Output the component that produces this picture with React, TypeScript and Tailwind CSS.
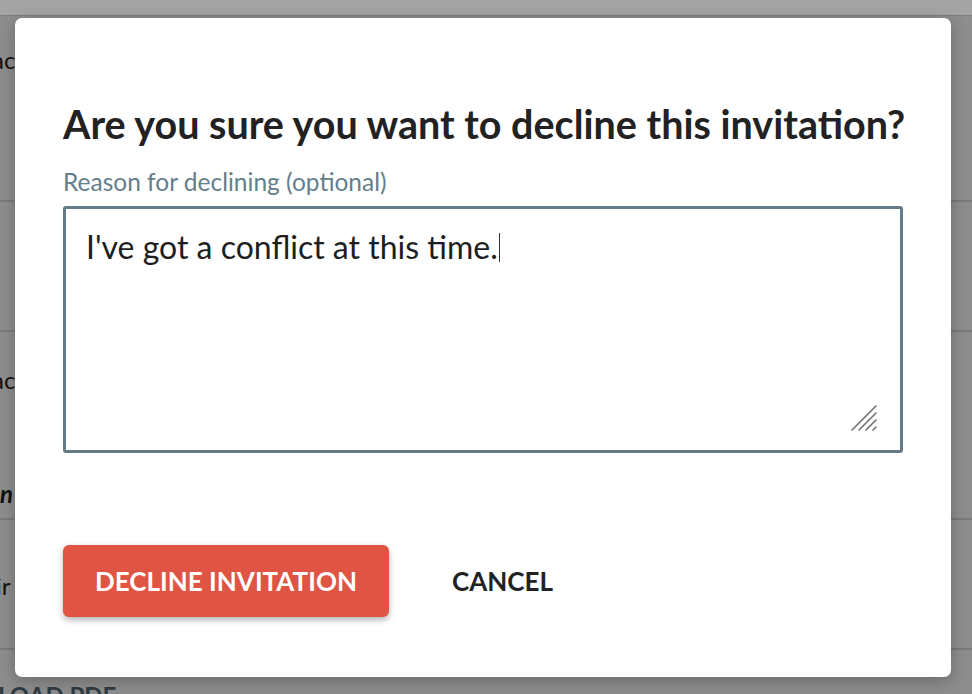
import React from "react";

const font = { fontFamily: 'Lato, "Open Sans", Arial, sans-serif' };

export default function App() {
  return (
    <div className="relative w-[972px] h-[694px] overflow-hidden bg-[#8d8d8d]" style={font}>
      {/* background page */}
      <div className="flex flex-col w-full">
        <div className="h-[16px] bg-[#a4a4a4] border-b border-[#7d7d7d]" />
        <div className="h-[186px] border-b-2 border-[#7a7a7a] pt-[26px]">
          <div className="text-[24px] text-[#111] ml-[-8px]">ac</div>
        </div>
        <div className="h-[130px] border-b-2 border-[#7a7a7a]" />
        <div className="h-[188px] border-b-2 border-[#7a7a7a] pt-[30px]">
          <div className="text-[24px] text-[#111] ml-[-8px]">ac</div>
          <div className="text-[24px] text-[#111] font-bold italic mt-[78px] ml-[-6px]">in</div>
        </div>
        <div className="h-[130px] border-b-2 border-[#7a7a7a] pt-[48px]">
          <div className="text-[24px] text-[#111] ml-[-4px]">ir</div>
        </div>
        <div className="pt-[28px] ml-[-83px] text-[24px] font-bold text-[#2f3b44]">DOWNLOAD PDF</div>
      </div>

      {/* modal */}
      <div className="absolute left-[15px] top-[18px] w-[936px] h-[659px] bg-white rounded-[7px] shadow-[0_4px_16px_rgba(0,0,0,0.25)] px-[48px] pt-[82px]">
        <h1 className="text-[39.5px] leading-[48px] font-bold text-[#222] whitespace-nowrap">
          Are you sure you want to decline this invitation?
        </h1>
        <label className="block mt-[20px] text-[24.5px] leading-[28px] text-[#657e8c]">
          Reason for declining (optional)
        </label>
        <div className="relative mt-[10px] w-[840px] h-[247px] border-[3px] border-[#657b87] rounded-[3px] pl-[20px] pt-[18px]">
          <div className="text-[32px] leading-[40px] text-[#1e1e1e] flex items-center">
            <span>I've got a conflict at this time.</span>
            <span className="inline-block w-[1px] h-[29px] bg-[#333] ml-[1px]" />
          </div>
          <svg className="absolute right-[22px] bottom-[18px]" width="28" height="28" viewBox="0 0 28 28">
            <g stroke="#6e6e6e" strokeWidth="1.6" strokeLinecap="round">
              <line x1="2" y1="26" x2="26" y2="2" />
              <line x1="9" y1="26" x2="26" y2="9" />
              <line x1="16" y1="26" x2="26" y2="16" />
              <line x1="23" y1="26" x2="26" y2="23" />
            </g>
          </svg>
        </div>
        <div className="flex items-center mt-[92px]">
          <button className="w-[326px] h-[72px] bg-[#e05444] rounded-[6px] text-white text-[26px] leading-[32px] font-bold shadow-[0_3px_6px_rgba(0,0,0,0.3)]">
            DECLINE INVITATION
          </button>
          <button className="ml-[63px] text-[26px] leading-[32px] font-bold text-[#222]">CANCEL</button>
        </div>
      </div>
    </div>
  );
}
